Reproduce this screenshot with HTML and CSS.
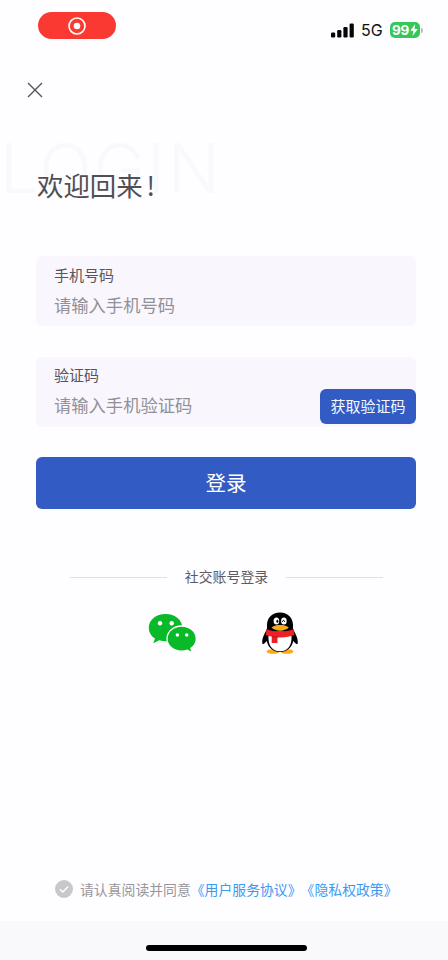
FILE: index.html
```html
<!DOCTYPE html>
<html lang="zh-CN">
<head>
<meta charset="utf-8">
<meta name="viewport" content="width=device-width, initial-scale=1">
<title>登录</title>
<link rel="stylesheet" href="styles.css">
</head>
<body>
<div class="screen">
  <header class="status">
    <div class="recording">
      <svg width="18" height="18" viewBox="0 0 18 18"><circle cx="9" cy="9" r="8" fill="none" stroke="#fff" stroke-width="1.6"/><circle cx="9" cy="9" r="3.3" fill="#fff"/></svg>
    </div>
    <div class="indicators">
      <svg class="signal" width="24" height="15" viewBox="0 0 24 15"><rect x="0" y="9.5" width="4.2" height="5" rx="1.2"/><rect x="6.2" y="7" width="4.2" height="7.5" rx="1.2"/><rect x="12.4" y="4" width="4.2" height="10.5" rx="1.2"/><rect x="18.6" y="0.5" width="4.2" height="14" rx="1.2"/></svg>
      <span class="network">5G</span>
      <div class="battery"><span>99</span><svg width="8" height="12" viewBox="0 0 8 12"><path d="M5.2 0 .3 6.8h3L2.5 12 7.8 4.9H4.6z" fill="#fff"/></svg></div>
      <i class="battery-tip"></i>
    </div>
  </header>
  <button class="close" aria-label="关闭"><svg width="16" height="16" viewBox="0 0 16 16"><path d="M1 1 15 15M15 1 1 15" stroke="#55535a" stroke-width="1.4" fill="none"/></svg></button>
  <main>
    <div class="heading"><span class="watermark" aria-hidden="true">LOGIN</span><h1>欢迎回来<span>!</span></h1></div>
    <label class="field"><span>手机号码</span><input type="tel" placeholder="请输入手机号码"></label>
    <div class="field code-field"><label for="code">验证码</label><input id="code" type="text" placeholder="请输入手机验证码"><button class="get-code">获取验证码</button></div>
    <button class="login">登录</button>
    <div class="divider"><span>社交账号登录</span></div>
    <div class="social">
      <svg class="wechat" width="50" height="42" viewBox="0 0 50 42">
        <path d="M17.5 2C8 2 .8 8.1.8 15.7c0 4.4 2.3 8.3 6.2 10.8L5.2 31.2l6.1-3c2 .7 4.2 1 6.6 1 9.4 0 16.5-6 16.5-13.5S27 2 17.5 2Z" fill="#08b928"/>
        <path d="M33.6 14C25.4 14 19 19.6 19 26.7s6.4 12.5 14.6 12.5c2 0 4-.3 5.7-1l5.2 2.7-1.6-4.6c3.4-2.3 5.4-5.7 5.4-9.6C48.3 19.6 41.8 14 33.6 14Z" fill="#08b928" stroke="#fefdff" stroke-width="1.3"/>
        <g fill="#fff"><circle cx="12" cy="11.3" r="2.2"/><circle cx="23.7" cy="11.3" r="2.2"/><circle cx="29.4" cy="23" r="1.8"/><circle cx="38.7" cy="23" r="1.8"/></g>
      </svg>
      <svg class="qq" width="36" height="42" viewBox="0 0 36 42">
        <ellipse cx="11" cy="39.5" rx="6.3" ry="2.3" fill="#f8aa19"/><ellipse cx="25" cy="39.5" rx="6.3" ry="2.3" fill="#f8aa19"/>
        <path d="M18 .5C9.8.5 5 6.2 5 13v3.5C3.2 21 0 25.5.2 30.4c.1 2.4 1.5 2.6 4.5-1.3C6.5 36.2 10.9 40 18 40s11.5-3.8 13.3-10.9c3 3.9 4.4 3.7 4.5 1.3C36 25.5 32.8 21 31 16.5V13C31 6.2 26.2.5 18 .5Z" fill="#000"/>
        <path d="M6.5 23.5C5.8 33 10 39.3 18 39.3S30.2 33 29.5 23.5C25 18 11 18 6.5 23.5Z" fill="#fff"/>
        <path d="M4.6 17.2c8.2 3 18.6 3 26.8 0l1 5.8c-4.8 2-10.2 2.7-16.9 2.4v5.7H9.7v-6.5c-2.3-.3-4.4-.8-6-1.6Z" fill="#ed2027"/>
        <path d="M10 24.3c1.8.5 3.5.8 5.5 1" stroke="#a90e18" stroke-width=".8" fill="none"/>
        <ellipse cx="14.4" cy="9" rx="2.8" ry="3.6" fill="#fff"/><ellipse cx="21.9" cy="9" rx="2.8" ry="3.6" fill="#fff"/>
        <ellipse cx="15.4" cy="9.3" rx="1" ry="1.5"/><path d="M20.4 10c.3-2.3 1.9-2.3 2.2 0" stroke="#000" fill="none"/>
        <path d="M9.5 15.6C12 13.6 15 13.1 18.2 13.1s6.2.5 8.6 2.5c-4.2 4.2-13 4.2-17.3 0Z" fill="#f8aa19"/>
      </svg>
    </div>
  </main>
  <div class="agreement">
    <svg width="18" height="18" viewBox="0 0 18 18"><circle cx="9" cy="9" r="9" fill="#c8c7cc"/><path d="m5 9.2 2.8 2.8 5.4-5.6" stroke="#fff" stroke-width="1.5" fill="none"/></svg>
    <p>请认真阅读并同意<a>《用户服务协议》</a><a>《隐私权政策》</a></p>
  </div>
  <footer><i></i></footer>
</div>
</body>
</html>
```
FILE: styles.css
```css
* { box-sizing: border-box; }
body { margin: 0; background: #fefdff; font-family: "Liberation Sans", "Noto Sans CJK SC", sans-serif; color: #57555c; }
button, input { font: inherit; border: 0; padding: 0; background: none; }
svg { display: block; flex: none; }
.screen { width: 448px; height: 960px; display: flex; flex-direction: column; overflow: hidden; }
.status { height: 60px; padding: 12px 26px 0 38px; display: flex; justify-content: space-between; }
.recording { width: 78px; height: 27px; border-radius: 14px; background: #fa3a32; display: flex; align-items: center; justify-content: center; }
.indicators { display: flex; align-items: center; height: 36px; }
.signal { fill: #050505; }
.network { font: 400 16px/20px Inter, sans-serif; color: #111; margin-left: 6px; width: 29px; }
.battery { width: 30px; height: 16px; border-radius: 5px; background: #35c759; display: flex; align-items: center; justify-content: center; gap: 1px; color: #fff; font: 700 13.5px/16px Inter, sans-serif; letter-spacing: -.2px; }
.battery-tip { width: 2px; height: 5px; border-radius: 0 2px 2px 0; background: #bbb; margin: 0 -1px 0 1px; }
.close { margin: 22px 0 0 27px; width: 16px; height: 16px; }
main { padding: 0 32px 0 36px; }
.heading { position: relative; height: 158px; padding-top: 67px; }
.watermark { position: absolute; left: -36px; top: 30px; font: 300 69px/80px Inter, sans-serif; letter-spacing: 2.2px; color: #f9f8fb; }
h1 { position: relative; margin: 0 0 0 1px; font: 400 26.4px/40px "Noto Sans CJK SC", sans-serif; color: #514f54; }
h1 span { margin-left: 4px; }
.field { display: flex; flex-direction: column; position: relative; height: 70px; border-radius: 6px; background: #f9f7fd; padding: 9px 18px; margin-bottom: 31px; font-size: 15px; line-height: 22px; }
.field input { height: 26px; margin-top: 6px; font-size: 17.3px; line-height: 26px; outline: 0; width: 240px; }
.field input::placeholder { color: #929097; opacity: 1; }
.code-field { margin-bottom: 30px; padding-top: 8px; }
.get-code { position: absolute; right: 0; bottom: 3px; width: 96px; height: 35px; border-radius: 6px; background: #335bc4; color: #f5f8ff; }
.login { display: block; width: 100%; height: 52px; border-radius: 6px; background: #335bc4; color: #fff; font-size: 20.5px; padding-bottom: 2px; }
.divider { display: flex; align-items: center; gap: 18px; height: 24px; margin: 56px 33px 0 34px; font-size: 13.9px; color: #5c5a60; }
.divider span { margin-top: -2px; }
.divider::before, .divider::after { content: ""; flex: 1; height: 1px; background: #e1dfe5; }
.social { display: flex; padding: 23px 0 0 112px; }
.qq { margin-left: 64px; }
.agreement { display: flex; align-items: center; gap: 7px; height: 24px; margin: auto 0 20px 55px; font-size: 13.85px; color: #98969c; white-space: nowrap; }
.agreement p { margin: -1px 0 0; }
.agreement a { color: #3b9af0; }
.agreement a + a { margin-left: 6px; }
footer { height: 39px; flex: none; background: #f9f8fb; display: flex; justify-content: center; padding: 24px 0 0 5px; }
footer i { width: 161px; height: 6px; border-radius: 3px; background: #000; }
```
